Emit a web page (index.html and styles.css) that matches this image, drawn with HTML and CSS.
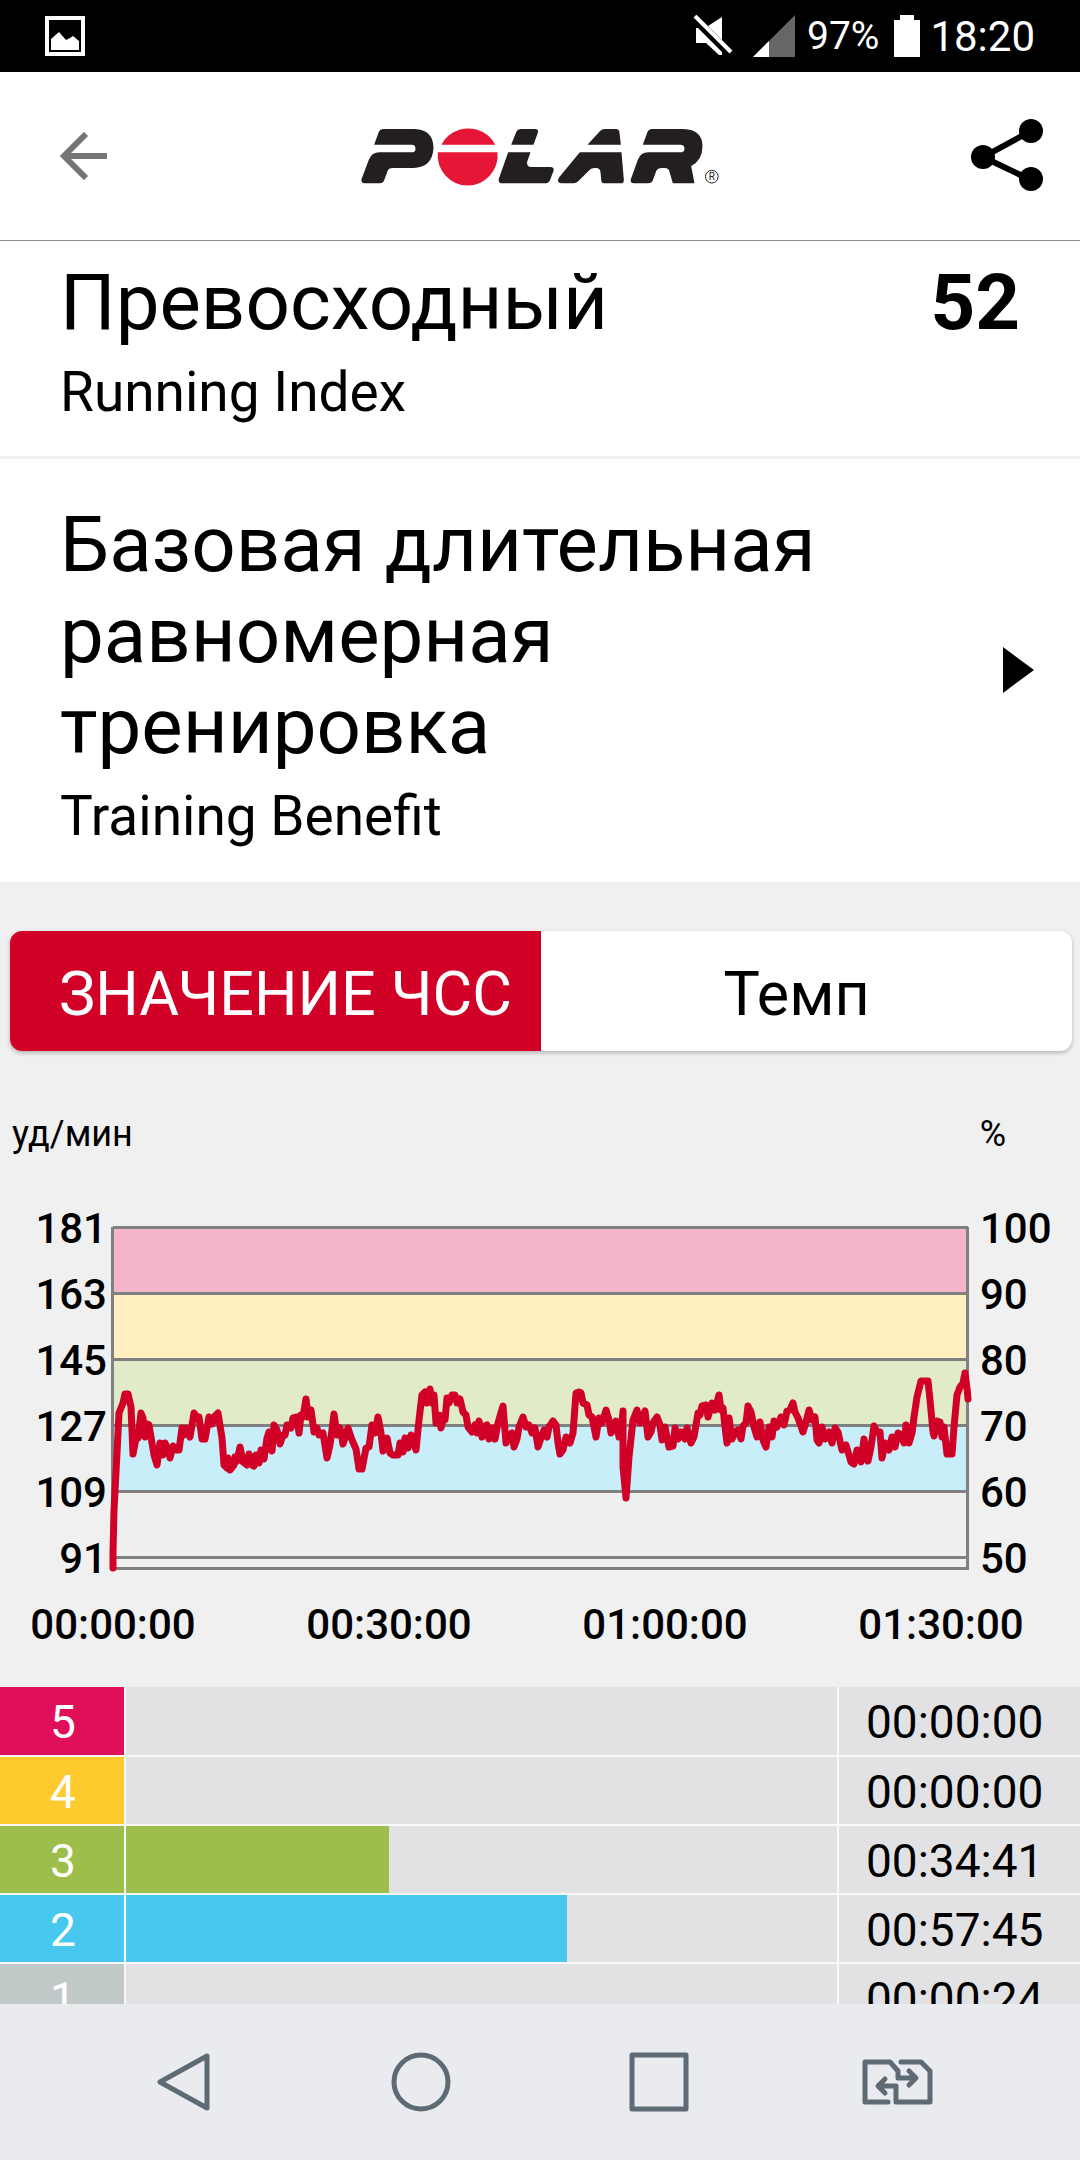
FILE: index.html
```html
<!DOCTYPE html>
<html lang="ru">
  <head>
    <meta charset="UTF-8" />
    <meta name="viewport" content="width=device-width, initial-scale=1.0" />
    <title>Polar</title>
    <link rel="stylesheet" href="styles.css">
  </head>
  <body>
    <div class="status-bar">
      <svg class="status-image" width="40" height="40" viewBox="0 0 40 40">
        <rect x="2" y="2" width="36" height="36" fill="none" stroke="#fff" stroke-width="4" />
        <path d="M6 34V23l8-7 7 8 4-2 3-2 6 5v9z" fill="#fff" />
      </svg>
      <div class="status-icons">
        <svg class="status-mute" width="40" height="42" viewBox="0 0 40 42">
          <path d="M3 13V28H13L26 40H29V37L5 13zM15 11L29 2V25z" fill="#fff" />
          <path d="M2 1L38 37" stroke="#fff" stroke-width="4" />
        </svg>
        <svg class="status-signal" width="42" height="42" viewBox="0 0 42 42">
          <path d="M42 0V42H0z" fill="#666" />
          <path d="M16 26V42H0z" fill="#fff" />
        </svg>
        <span class="status-percent">97%</span>
        <svg class="status-battery" width="26" height="42" viewBox="0 0 26 42">
          <path d="M6 0H20V5H26V42H0V5H6z" fill="#fff" />
        </svg>
        <span class="status-time">18:20</span>
      </div>
    </div>

    <header class="header">
      <button class="icon-btn" aria-label="Назад">
        <svg width="48" height="48" viewBox="0 0 48 48" fill="none" stroke="#757575" stroke-width="6">
          <path d="M26 2L4 24L26 46M4 24H47" />
        </svg>
      </button>
      <svg class="logo" viewBox="63 75 1077 180" role="img" aria-label="Polar">
        <g fill="#231f20">
          <path d="M104 131L117 95Q121 84 132 84H225Q282 86 282 142Q278 200 222 201H160Q147 201 144 211L134 238Q131 247 121 247H76Q64 247 66 235L88 176Q97 154 120 154H217Q228 154 228 143Q228 131 217 131z" />
          <path d="M515 131L530 94Q534 84 546 84H588Q598 84 595 95L582 131zM506 154H573L563 182Q561 198 575 198H633Q645 198 642 210L632 236Q628 247 616 247H488Q475 247 478 233z" />
          <path d="M744 131L781 91Q787 84 797 84H830Q839 84 840 95L844 131zM721 154H846L853 236Q854 247 843 247H796Q785 247 785 236L783 213Q781 201 770 201H764Q754 201 747 210L716 241Q711 247 702 247H664Q650 245 659 229z" />
          <path d="M910 131L923 95Q927 84 938 84H1032Q1089 86 1089 136Q1089 178 1055 195L1065 247H1000L990 212Q988 201 975 201H968Q954 201 950 211L940 238Q937 247 926 247H884Q871 247 874 235L895 176Q904 154 926 154H1022Q1035 154 1035 143Q1035 131 1022 131z" />
        </g>
        <path d="M306 131A90 88 0 0 1 467 131zM295 154H474A90 90 0 1 1 295 154z" fill="#e51636" />
        <circle cx="1117" cy="227" r="19" fill="none" stroke="#231f20" stroke-width="3" />
        <text class="logo-mark" x="1117" y="238" text-anchor="middle">R</text>
      </svg>
      <button class="icon-btn" aria-label="Поделиться">
        <svg width="74" height="74" viewBox="0 0 74 74">
          <path d="M61 12L13 38L61 61" fill="none" stroke="#000" stroke-width="6" />
          <circle cx="13" cy="38" r="12" />
          <circle cx="61" cy="12" r="12" />
          <circle cx="61" cy="60" r="12" />
        </svg>
      </button>
    </header>

    <main class="content">
      <section class="item item-index">
        <div class="item-text">
          <h2>Превосходный</h2>
          <p>Running Index</p>
        </div>
        <strong class="item-value">52</strong>
      </section>

      <section class="item item-benefit">
        <div class="item-text">
          <h2>Базовая длительная равномерная тренировка</h2>
          <p>Training Benefit</p>
        </div>
        <svg class="item-arrow" width="31" height="46" viewBox="0 0 31 46">
          <path d="M0 0L31 23L0 46z" />
        </svg>
      </section>

      <div class="tabs">
        <button class="tab active">ЗНАЧЕНИЕ ЧСС</button>
        <button class="tab">Темп</button>
      </div>

      <div class="units">
        <span>уд/мин</span>
        <span>%</span>
      </div>

      <svg class="chart" viewBox="0 0 1080 460">
        <!-- heart rate zones -->
        <rect x="113" y="28" width="855" height="66" fill="#f5b5cb" />
        <rect x="113" y="94" width="855" height="66" fill="#ffeebf" />
        <rect x="113" y="160" width="855" height="66" fill="#e1ebc8" />
        <rect x="113" y="226" width="855" height="66" fill="#c8eefa" />
        <rect x="113" y="292" width="855" height="66" fill="#eef0ef" />
        <path class="grid" d="M113 27.5H968M113 93.5H968M113 159.5H968M113 225.5H968M113 291.5H968M113 357.5H968M112.5 27V368.5H967.5V27" />

        <polyline class="pulse" points="113,368 113,353 114,310 117,253 119,213 123,203 125,194 128,194 131,207 133,254 136,238 138,238 141,213 143,218 145,237 147,224 149,225 152,243 154,255 157,265 160,243 163,255 165,243 168,250 170,258 173,246 176,250 179,250 182,228 184,235 186,228 190,237 194,213 197,217 199,217 202,239 205,239 209,217 212,224 215,216 218,213 222,238 224,265 227,268 228,258 230,270 234,265 235,257 237,261 240,247 243,262 247,265 249,254 252,265 254,266 256,255 259,263 261,250 264,259 267,238 269,232 272,251 274,225 277,230 280,244 283,235 285,235 287,225 291,228 293,218 297,217 299,233 301,215 303,217 306,199 308,217 311,210 314,232 317,228 319,235 323,233 327,258 330,245 334,214 337,235 340,228 343,244 348,228 352,240 356,249 359,269 362,269 366,248 369,247 372,225 375,233 378,217 381,233 383,251 387,238 390,253 393,255 398,255 400,243 403,252 405,238 408,248 411,235 414,243 416,250
          419,220 422,195 425,192 427,203 430,189 432,203 434,195 436,223 439,215 441,228 444,215 445,220 447,198 449,203 452,195 455,195 457,203 460,199 463,212 466,215 468,227 472,232 475,225 477,233 479,221 482,237 485,226 487,225 489,239 493,228 495,239 498,223 503,206 506,243 509,235 512,233 514,247 517,239 519,227 523,217 526,227 529,225 532,233 535,228 538,247 542,235 544,230 547,237 549,227 553,221 556,225 558,243 560,254 563,250 566,237 570,243 573,233 576,193 579,192 581,193 583,203 587,205 589,215 592,217 596,237 599,218 602,223 606,210 609,220 611,233 614,227 616,221 619,237 621,233 623,211 623,267 626,298 629,257 633,220 637,210 640,223 645,211 648,237 651,232 653,223 657,217 660,225 662,240 665,227 669,247 673,246 675,228 678,239 681,232 685,239 687,228 691,243 694,237 698,213
          700,215 702,206 706,205 708,217 712,203 715,210 719,195 721,210 723,208 725,227 727,243 729,218 732,239 735,232 738,230 741,239 743,226 746,223 748,206 751,212 754,227 757,237 760,222 763,240 766,247 769,227 772,237 774,221 777,227 781,217 784,225 787,211 790,210 793,203 795,212 798,218 803,232 806,222 809,210 812,220 815,217 817,240 819,243 822,227 825,239 829,232 832,243 835,228 838,232 842,250 846,245 849,255 851,262 854,264 857,250 861,262 864,239 868,261 871,247 874,226 877,232 880,232 882,258 885,243 889,250 892,237 895,247 898,233 901,235 904,243 906,225 909,243 912,233 914,217 917,197 921,181 928,181 930,200 933,232 934,236 937,221 940,222 942,237 944,227 947,254 952,254 954,227 957,195 960,187 963,183 965,173 967,188 968,199" />

        <g class="axis" text-anchor="end">
          <text x="107" y="43">181</text>
          <text x="107" y="109">163</text>
          <text x="107" y="175">145</text>
          <text x="107" y="241">127</text>
          <text x="107" y="307">109</text>
          <text x="107" y="373">91</text>
        </g>
        <g class="axis">
          <text x="980" y="43">100</text>
          <text x="980" y="109">90</text>
          <text x="980" y="175">80</text>
          <text x="980" y="241">70</text>
          <text x="980" y="307">60</text>
          <text x="980" y="373">50</text>
        </g>
        <g class="axis" text-anchor="middle">
          <text x="113" y="439">00:00:00</text>
          <text x="389" y="439">00:30:00</text>
          <text x="665" y="439">01:00:00</text>
          <text x="941" y="439">01:30:00</text>
        </g>
      </svg>

      <table class="zones">
        <tr>
          <th class="zone-5" scope="row">5</th>
          <td class="zone-track"></td>
          <td class="zone-time">00:00:00</td>
        </tr>
        <tr>
          <th class="zone-4" scope="row">4</th>
          <td class="zone-track"></td>
          <td class="zone-time">00:00:00</td>
        </tr>
        <tr>
          <th class="zone-3" scope="row">3</th>
          <td class="zone-track"><div class="zone-bar zone-3" style="width: 37%"></div></td>
          <td class="zone-time">00:34:41</td>
        </tr>
        <tr>
          <th class="zone-2" scope="row">2</th>
          <td class="zone-track"><div class="zone-bar zone-2" style="width: 62%"></div></td>
          <td class="zone-time">00:57:45</td>
        </tr>
        <tr>
          <th class="zone-1" scope="row">1</th>
          <td class="zone-track"></td>
          <td class="zone-time">00:00:24</td>
        </tr>
      </table>
    </main>

    <nav class="nav-bar">
      <button class="icon-btn" aria-label="Back">
        <svg width="58" height="60" viewBox="0 0 58 60"><path d="M53 4V56L6 30z" /></svg>
      </button>
      <button class="icon-btn" aria-label="Home">
        <svg width="60" height="60" viewBox="0 0 60 60"><circle cx="30" cy="30" r="27" /></svg>
      </button>
      <button class="icon-btn" aria-label="Recent apps">
        <svg width="60" height="60" viewBox="0 0 60 60"><rect x="3" y="3" width="54" height="54" /></svg>
      </button>
      <button class="icon-btn" aria-label="Switch SIM">
        <svg width="71" height="46" viewBox="0 0 71 46">
          <path d="M26 43H3V3H28L36 12V19H53M47 12L54 19L47 26" />
          <path d="M39 3H59L68 12V43H34V27H17M23 20L16 27L23 34" />
        </svg>
      </button>
    </nav>
  </body>
</html>
```
FILE: styles.css
```css
:root {
  --background-color: #f0f0f0;
  --accent-color: #d10027;
  --row-color: #e2e2e4;
  --nav-color: #e9ebee;
}

* {
  box-sizing: border-box;
}

body {
  font-family: Roboto, "Liberation Sans", sans-serif;
  background: var(--background-color);
  color: #000;
  margin: 0;
  height: 100vh;
  display: flex;
  flex-direction: column;
  overflow: hidden;
}

svg {
  display: block;
}

button {
  border: none;
  padding: 0;
  margin: 0;
  background: none;
  font-family: inherit;
  color: inherit;
  cursor: pointer;
}

/* Status bar */
.status-bar {
  flex: none;
  height: 72px;
  padding: 0 45px;
  background: #000;
  color: #fff;
  display: flex;
  justify-content: space-between;
  align-items: center;
}

.status-icons {
  display: flex;
  align-items: center;
}

.status-signal {
  margin: 0 12px 0 20px;
}

.status-percent {
  font-size: 39px;
}

.status-battery {
  margin: 0 10px 0 15px;
}

.status-time {
  font-size: 42px;
}

/* Header */
.header {
  flex: none;
  height: 169px;
  padding: 0 36px 0 60px;
  background: #fff;
  border-bottom: 1px solid #909090;
  display: grid;
  grid-template-columns: 74px 1fr 74px;
  align-items: center;
}

.logo {
  width: 360px;
  height: 60px;
  justify-self: center;
  margin-right: 24px;
}

.logo-mark {
  font-size: 30px;
  fill: #231f20;
}

/* Content */
.content {
  flex: 1;
  min-height: 0;
  overflow: hidden;
}

.item {
  background: #fff;
  display: flex;
  justify-content: space-between;
  padding: 40px 60px 34px;
}

.item-index {
  padding-top: 16px;
  padding-bottom: 32px;
  border-bottom: 3px solid var(--background-color);
}

.item-benefit {
  padding-right: 46px;
  align-items: center;
}

.item-text {
  max-width: 800px;
}

.item h2 {
  margin: 0 0 12px;
  font-size: 78px;
  line-height: 91px;
  font-weight: 400;
}

.item p {
  margin: 0;
  font-size: 55px;
  line-height: 64px;
}

.item-value {
  font-size: 78px;
  line-height: 91px;
}

.item-arrow {
  margin-bottom: 8px;
}

.tabs {
  margin: 49px 8px 0 10px;
  display: flex;
  border-radius: 12px;
  background: #fff;
  box-shadow: 0 2px 4px rgba(0, 0, 0, 0.25);
}

.tab {
  flex: 1;
  height: 120px;
  padding: 6px 20px 0 0;
  font-size: 61px;
}

.tab.active {
  padding: 6px 0 0 20px;
  background: var(--accent-color);
  border-radius: 12px 0 0 12px;
  color: #fff;
}

.units {
  display: flex;
  justify-content: space-between;
  margin: 62px 0 45px;
  padding: 0 74px 0 12px;
  font-size: 36px;
  line-height: 42px;
}

.chart {
  width: 100%;
  height: auto;
}

.grid {
  fill: none;
  stroke: #808080;
  stroke-width: 3;
}

.pulse {
  fill: none;
  stroke: var(--accent-color);
  stroke-width: 7;
  stroke-linecap: round;
  stroke-linejoin: round;
}

.axis {
  font-size: 42px;
  font-weight: 500;
}

/* Zones */
.zones {
  width: 100%;
  margin-top: 27px;
  border-collapse: collapse;
  table-layout: fixed;
  font-size: 46px;
}

.zones th,
.zones td {
  height: 69px;
  padding: 0;
  line-height: 54px;
  border-bottom: 2px solid #f8f8f8;
}

.zones th {
  width: 125px;
  padding: 2px 0 0 2px;
  border-right: 2px solid #f8f8f8;
  color: #fff;
  font-weight: 400;
}

.zone-track,
.zone-time {
  background: var(--row-color);
}

.zones .zone-time {
  width: 242px;
  padding: 2px 0 0 27px;
  border-left: 2px solid #f8f8f8;
}

.zone-bar {
  height: 67px;
}

.zone-5 {
  background: #e00f5a;
}

.zone-4 {
  background: #ffca2d;
}

.zone-3 {
  background: #9dbe4b;
}

.zone-2 {
  background: #48c7ef;
}

.zone-1 {
  background: #c2cac9;
}

/* Navigation bar */
.nav-bar {
  flex: none;
  height: 156px;
  padding: 0 64px;
  background: var(--nav-color);
  display: grid;
  grid-template-columns: repeat(4, 1fr);
}

.nav-bar .icon-btn {
  display: flex;
  justify-content: center;
  align-items: center;
}

.nav-bar svg {
  fill: none;
  stroke: #5f6b74;
  stroke-width: 5;
  stroke-linejoin: round;
  stroke-linecap: round;
}
```
